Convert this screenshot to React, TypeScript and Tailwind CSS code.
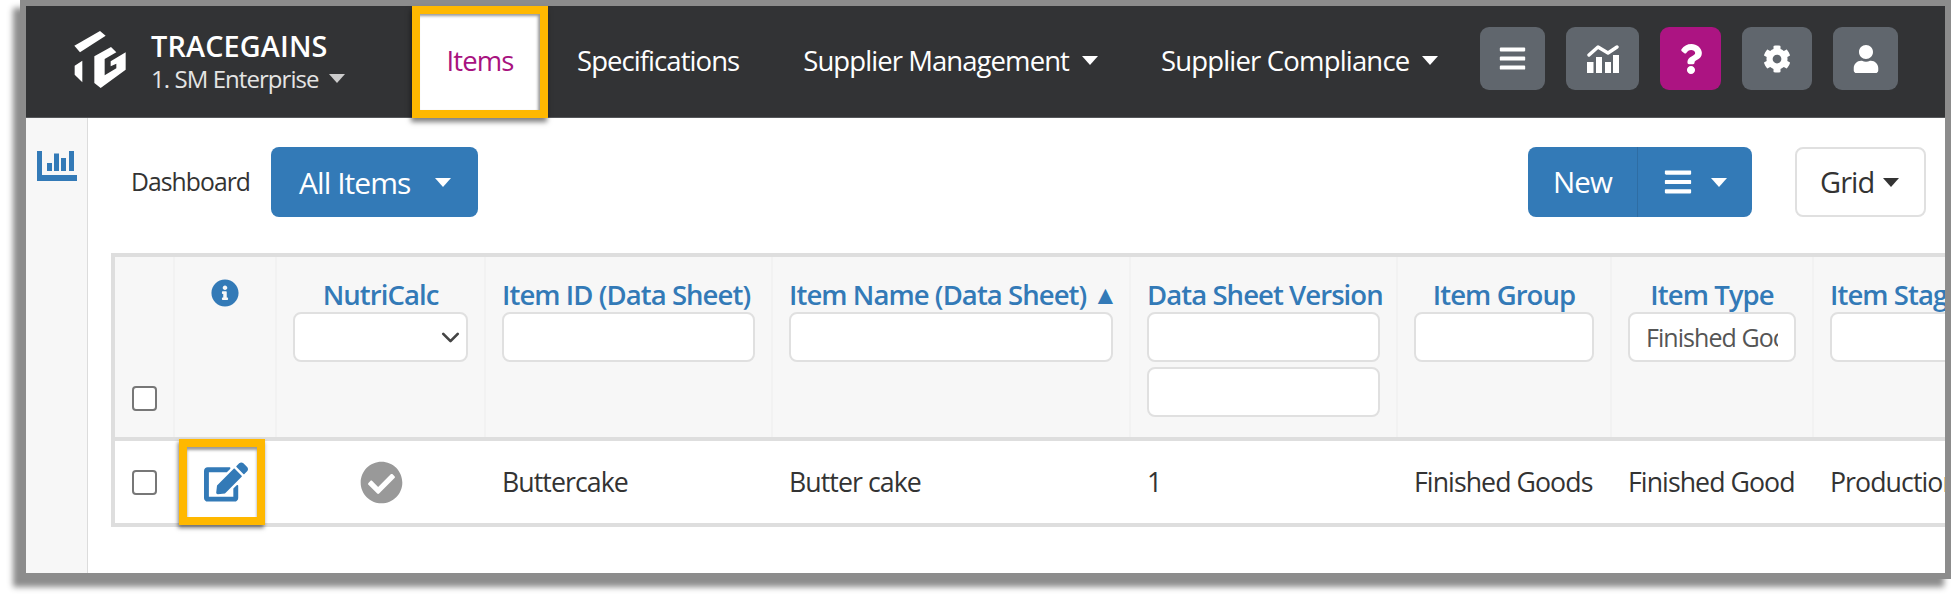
import { ChevronDown } from "lucide-react"
import { FaBars, FaCheckCircle, FaCog, FaEdit, FaInfoCircle, FaQuestion, FaUser } from "react-icons/fa"

const columns = [60, 102, 209, 287, 358, 267, 214, 202, 220]

function Caret({ className = "border-t-white" }: { className?: string }) {
    return <span className={`inline-block w-0 h-0 border-x-[8px] border-x-transparent border-t-[9px] ${className}`} />
}

function TgLogo() {
    return (
        <svg viewBox="0 0 210 216" className="w-[70px] h-[72px] shrink-0 -ml-[10px] mb-[6px] fill-white">
            <polygon points="28,68 105,24 122,38 45,88" />
            <polygon points="29,128 52,113 52,178 29,155" />
            <polygon points="88,100 138,72 154,88 119,108 119,157 154,136 154,122 137,130 137,115 182,88 182,140 107,195 88,180" />
        </svg>
    )
}

function TrendIcon() {
    return (
        <svg viewBox="0 0 32 28" className="w-[32px] h-[28px]">
            <rect x="0" y="17" width="6.5" height="11" fill="white" />
            <rect x="9" y="12" width="6" height="16" fill="white" />
            <rect x="18" y="17" width="6" height="11" fill="white" />
            <rect x="26" y="10" width="6" height="18" fill="white" />
            <polyline points="2,10 11,2 21,8 30,2" fill="none" stroke="white" strokeWidth="3.4" strokeLinecap="round" strokeLinejoin="round" />
        </svg>
    )
}

function SideChartIcon() {
    return (
        <svg viewBox="0 0 40 30" className="w-[40px] h-[30px] fill-[#337ab7]">
            <rect x="0" y="0" width="5" height="30" />
            <rect x="0" y="24" width="40" height="6" />
            <rect x="10" y="12" width="5" height="8" />
            <rect x="17" y="2.5" width="5" height="17.5" />
            <rect x="24" y="7" width="5" height="13" />
            <rect x="32" y="0" width="5" height="20" />
        </svg>
    )
}

function FilterInput({ value = "" }: { value?: string }) {
    return (
        <input
            readOnly
            value={value}
            className="block w-full h-[50px] px-[16px] rounded-[8px] border-2 border-[#e0e0e0] bg-white text-[#555] text-[25px] font-normal outline-none"
        />
    )
}

function Checkbox() {
    return <span className="block w-[25px] h-[25px] rounded-[4px] border-2 border-[#777] bg-white" />
}

function HeaderCell({ title, center = true, children }: { title: string; center?: boolean; children?: React.ReactNode }) {
    return (
        <th className="align-top px-[16px] pt-[20px] border-r-2 border-r-[#f2f2f2] font-normal">
            <div className={`h-[35px] leading-[35px] text-[27.5px] font-semibold text-[#337ab7] whitespace-nowrap ${center ? "text-center" : "text-left"}`}>{title}</div>
            {children}
        </th>
    )
}

export default function App() {
    return (
        <div className="w-[1951px] h-[599px] bg-white overflow-hidden font-['Open_Sans',sans-serif] text-[26.7px] tracking-[-0.035em] text-[#333]">
            <div className="ml-[20px] w-[1931px] h-[579px] border-[6px] border-[#8c8c8c] shadow-[-7px_8px_6px_rgba(0,0,0,0.45)] flex flex-col bg-white">
                {/* barra superior */}
                <header className="relative z-10 h-[112px] shrink-0 bg-[#323335] border-b border-b-[#55575a] flex items-center text-white text-[27.5px] pl-[49px] pr-[47px]">
                    <TgLogo />
                    <div className="ml-[16px] w-[261px]">
                        <div className="text-[28.8px] leading-[33px] font-semibold tracking-[0.005em]">TRACEGAINS</div>
                        <div className="text-[24px] leading-[33px] text-[#e4e4e4] flex items-center gap-[10px]">
                            1. SM Enterprise <Caret className="border-t-[#ccc]" />
                        </div>
                    </div>
                    <div className="self-start h-[112px] w-[136px] shrink-0 border-[8px] border-[#ffb800] bg-white flex items-center justify-center pb-[2px] text-[#a8127f] font-medium shadow-[-1px_4px_5px_rgba(0,0,0,0.5),inset_-2px_2px_3px_rgba(0,0,0,0.4)]">
                        Items
                    </div>
                    <span className="ml-[29px] mb-[2px]">Specifications</span>
                    <span className="ml-[64px] mb-[2px] flex items-center gap-[13px]">Supplier Management <Caret /></span>
                    <span className="ml-[63px] mb-[2px] flex items-center gap-[13px] tracking-[-0.03em]">Supplier Compliance <Caret /></span>
                    <div className="ml-auto mb-[6px] flex items-center gap-[21px]">
                        <div className="w-[65px] h-[63px] rounded-[9px] bg-[#60666d] flex items-center justify-center"><FaBars size={29} /></div>
                        <div className="w-[73px] h-[63px] rounded-[9px] bg-[#60666d] flex items-center justify-center"><TrendIcon /></div>
                        <div className="w-[61px] h-[63px] rounded-[9px] bg-[#ac1482] flex items-center justify-center"><FaQuestion size={30} /></div>
                        <div className="w-[70px] h-[63px] rounded-[9px] bg-[#60666d] flex items-center justify-center"><FaCog size={28} /></div>
                        <div className="w-[65px] h-[63px] rounded-[9px] bg-[#60666d] flex items-center justify-center"><FaUser size={28} /></div>
                    </div>
                </header>

                <div className="flex-1 flex min-h-0">
                    <aside className="w-[62px] shrink-0 bg-[#f7f7f7] border-r border-r-[#dcdcdc] pl-[11px] pt-[33px]">
                        <SideChartIcon />
                    </aside>

                    <main className="flex-1 min-w-0 overflow-hidden pt-[29px]">
                        <div className="flex items-center h-[70px] pl-[43px] pr-[19px]">
                            <span className="w-[119px] text-[24.7px] whitespace-nowrap">Dashboard</span>
                            <button className="ml-[21px] w-[207px] h-[70px] rounded-[8px] bg-[#337ab7] text-white text-[30px] flex items-center pl-[28px] gap-[24px]">
                                All Items <Caret />
                            </button>
                            <div className="ml-auto flex h-[70px] rounded-[8px] bg-[#337ab7] text-white text-[29.5px]">
                                <button className="w-[110px] border-r border-r-[#2e6da4]">New</button>
                                <button className="w-[114px] flex items-center pl-[25px] gap-[18px]">
                                    <FaBars size={30} /> <Caret />
                                </button>
                            </div>
                            <button className="ml-[43px] w-[131px] h-[70px] rounded-[8px] border-2 border-[#e0e0e0] bg-white text-[29px] flex items-center pl-[23px] gap-[9px]">
                                Grid <Caret className="border-t-[#333]" />
                            </button>
                        </div>

                        <div className="ml-[23px] mt-[36px]">
                            <table className="table-fixed border-separate border-spacing-0 w-[1919px] border-y-4 border-l-4 border-[#dedede]">
                                <colgroup>
                                    {columns.map((w, i) => (
                                        <col key={i} style={{ width: w }} />
                                    ))}
                                </colgroup>
                                <thead>
                                    <tr className="h-[180px] bg-[#f7f7f7]">
                                        <th className="align-bottom pl-[17px] pb-[26px] border-r-2 border-r-[#f2f2f2]">
                                            <Checkbox />
                                        </th>
                                        <th className="align-top pt-[22px] border-r-2 border-r-[#f2f2f2]">
                                            <FaInfoCircle size={28} className="mx-auto text-[#337ab7]" />
                                        </th>
                                        <HeaderCell title="NutriCalc">
                                            <div className="relative">
                                                <FilterInput />
                                                <ChevronDown size={29} strokeWidth={2.2} className="absolute right-[3px] top-[11px] text-[#444]" />
                                            </div>
                                        </HeaderCell>
                                        <HeaderCell title="Item ID (Data Sheet)" center={false}>
                                            <FilterInput />
                                        </HeaderCell>
                                        <th className="align-top px-[16px] pt-[20px] border-r-2 border-r-[#f2f2f2] font-normal">
                                            <div className="h-[35px] leading-[35px] text-[27.5px] font-semibold text-[#337ab7] whitespace-nowrap text-left">
                                                Item Name (Data Sheet) <span className="text-[26px] leading-[0] align-[1px]">▲</span>
                                            </div>
                                            <FilterInput />
                                        </th>
                                        <HeaderCell title="Data Sheet Version" center={false}>
                                            <FilterInput />
                                            <div className="mt-[5px]">
                                                <FilterInput />
                                            </div>
                                        </HeaderCell>
                                        <HeaderCell title="Item Group">
                                            <FilterInput />
                                        </HeaderCell>
                                        <HeaderCell title="Item Type">
                                            <FilterInput value="Finished Goods" />
                                        </HeaderCell>
                                        <HeaderCell title="Item Stage" center={false}>
                                            <FilterInput />
                                        </HeaderCell>
                                    </tr>
                                </thead>
                                <tbody>
                                    <tr className="h-[86px]">
                                        <td className="pl-[17px] border-t-4 border-t-[#dedede]"><Checkbox /></td>
                                        <td className="relative border-t-4 border-t-[#dedede]">
                                            <FaEdit size={44} className="mx-auto text-[#337ab7]" />
                                            <span className="absolute left-[4px] -top-[2px] w-[86px] h-[86px] border-[8px] border-[#ffb800] shadow-[-1px_3px_4px_rgba(0,0,0,0.5),inset_0_3px_3px_rgba(0,0,0,0.4)]" />
                                        </td>
                                        <td className="border-t-4 border-t-[#dedede]"><FaCheckCircle size={43} className="mx-auto text-[#999]" /></td>
                                        <td className="px-[16px] border-t-4 border-t-[#dedede]">Buttercake</td>
                                        <td className="px-[16px] border-t-4 border-t-[#dedede]">Butter cake</td>
                                        <td className="px-[16px] border-t-4 border-t-[#dedede]">1</td>
                                        <td className="px-[16px] border-t-4 border-t-[#dedede] whitespace-nowrap">Finished Goods</td>
                                        <td className="px-[16px] border-t-4 border-t-[#dedede] whitespace-nowrap">Finished Good</td>
                                        <td className="px-[16px] border-t-4 border-t-[#dedede] whitespace-nowrap">Production</td>
                                    </tr>
                                </tbody>
                            </table>
                        </div>
                    </main>
                </div>
            </div>
        </div>
    )
}
